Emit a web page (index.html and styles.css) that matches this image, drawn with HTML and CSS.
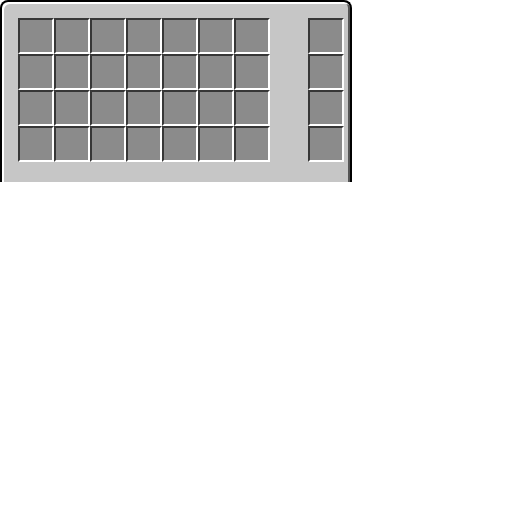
FILE: index.html
```html
<!DOCTYPE html>
<html lang="en">
<head>
    <meta charset="UTF-8">
    <meta name="viewport" content="width=device-width, initial-scale=1.0">
    <title>Inventory</title>
    <link rel="stylesheet" href="styles.css">
</head>
<body>
    <div class="panel">
        <div class="grid main"></div>
        <div class="grid side"></div>
    </div>

    <script>
        // fill the slot grids
        function fillSlots(selector, count) {
            let grid = document.querySelector(selector);
            for (let i = 0; i < count; i++) {
                let slot = document.createElement("div");
                slot.className = "slot";
                grid.appendChild(slot);
            }
        }
        fillSlots(".main", 28);
        fillSlots(".side", 4);
    </script>
</body>
</html>
```

FILE: styles.css
```css
body {
    margin: 0;
    background: #ffffff;
    font-family: "Liberation Sans", Arial, sans-serif;
}
.panel {
    display: flex;
    gap: 38px;
    width: 352px;
    height: 182px;
    box-sizing: border-box;
    padding: 16px 0 0 16px;
    background-color: #c6c6c6;
    border: 2px solid #000000;
    border-bottom: none;
    border-radius: 8px 8px 0 0;
    box-shadow: inset 2px 2px 0 #ffffff, inset -2px 0 0 #555555;
}
.grid {
    display: grid;
    grid-template-columns: repeat(7, 36px);
    grid-auto-rows: 36px;
    align-content: start;
}
.side {
    grid-template-columns: 36px;
}
.slot {
    box-sizing: border-box;
    background-color: #8b8b8b;
    border-top: 2px solid #373737;
    border-left: 2px solid #373737;
    border-bottom: 2px solid #ffffff;
    border-right: 2px solid #ffffff;
}
```
